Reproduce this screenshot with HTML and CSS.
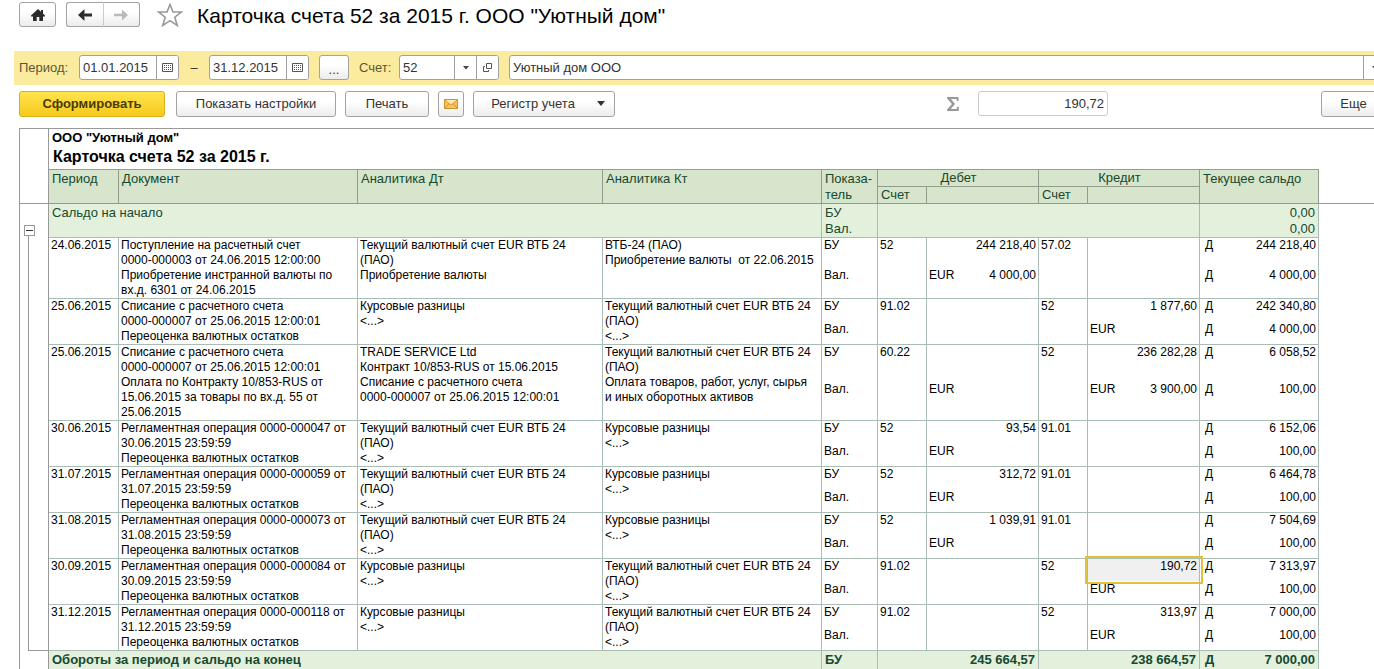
FILE: index.html
```html
<!DOCTYPE html>
<html lang="ru">
<head>
<meta charset="utf-8">
<meta name="viewport" content="width=device-width, initial-scale=1">
<title>Карточка счета 52 за 2015 г.</title>
<link rel="stylesheet" href="styles.css">
</head>
<body>
<header class="topbar">
  <button class="btn home" type="button" aria-label="Начальная страница">
    <svg width="16" height="14" viewBox="0 0 16 14"><path d="M8 1 1 7.500V8.500H3V13h3.700V9h2.600v4H13V8.500h2V7.500L13 5.600V2h-2v1.800z" fill="#2b2b2b"/></svg>
  </button>
  <div class="nav">
    <button class="btn" type="button" aria-label="Назад">
      <svg width="16" height="12" viewBox="0 0 16 12"><path d="M7 .5v4h8v3H7v4L1 6z" fill="#2b2b2b"/><path d="M7.500 0v4H5.500zM7.500 12V8H5.500z" fill="#2b2b2b"/></svg>
    </button>
    <button class="btn" type="button" aria-label="Вперед">
      <svg width="16" height="12" viewBox="0 0 16 12"><path d="M9 .5v4.300H1v2.400h8v4.300L15 6z" fill="#b9b9b9"/></svg>
    </button>
  </div>
  <button class="star" type="button" aria-label="Избранное">
    <svg width="26" height="24" viewBox="0 0 26 24"><path d="M13 1.500l3 7.500h8.500l-6.700 5.200 2.500 8.300L13 17.700l-7.300 4.800 2.500-8.300L1.500 9H10z" fill="#fff" stroke="#999" stroke-width="1.600"/></svg>
  </button>
  <h1 class="title">Карточка счета 52 за 2015 г. ООО "Уютный дом"</h1>
</header>

<form class="filter">
  <label class="caption caption-period" for="from">Период:</label>
  <div class="field date">
    <input id="from" type="text" value="01.01.2015">
    <button type="button" aria-label="Календарь"><svg width="11" height="9" viewBox="0 0 11 9"><path d="M.5.5h10v8H.5z" fill="none" stroke="#555"/><path d="M2 2.500h7M2 4.500h7M2 6.500h7" stroke="#555" stroke-dasharray="1 1"/></svg></button>
  </div>
  <span class="dash">–</span>
  <div class="field date">
    <input type="text" value="31.12.2015" aria-label="Конец периода">
    <button type="button" aria-label="Календарь"><svg width="11" height="9" viewBox="0 0 11 9"><path d="M.5.5h10v8H.5z" fill="none" stroke="#555"/><path d="M2 2.500h7M2 4.500h7M2 6.500h7" stroke="#555" stroke-dasharray="1 1"/></svg></button>
  </div>
  <button class="btn dots" type="button" aria-label="Выбрать период">...</button>
  <label class="caption caption-account" for="account">Счет:</label>
  <div class="field account">
    <input id="account" type="text" value="52">
    <button type="button" aria-label="Список"><svg width="6" height="4" viewBox="0 0 6 4"><path d="M0 0h6L3 3.500z" fill="#444"/></svg></button>
    <button type="button" aria-label="Открыть"><svg width="9" height="9" viewBox="0 0 9 9"><path d="M3.500.5h5v5h-5zM2 3.500H.5v5h5V7" fill="none" stroke="#555"/></svg></button>
  </div>
  <div class="field org">
    <input type="text" value="Уютный дом ООО" aria-label="Организация">
    <button type="button" aria-label="Список"><svg width="6" height="4" viewBox="0 0 6 4"><path d="M0 0h6L3 3.500z" fill="#444"/></svg></button>
  </div>
</form>

<div class="actions">
  <button class="btn primary" type="button">Сформировать</button>
  <button class="btn settings" type="button">Показать настройки</button>
  <button class="btn print" type="button">Печать</button>
  <button class="btn mail" type="button" aria-label="Отправить по почте">
    <svg width="14" height="10" viewBox="0 0 14 10"><path d="M.5.5h13v9H.5z" fill="#f6c45c" stroke="#cf922c"/><path d="M.5.5 7 6.200 13.500.5M.5 9.500 5 4.600M13.500 9.500 9 4.600" fill="none" stroke="#cf922c"/><path d="M1.500.900h11L7 5.500z" fill="#fde6a8"/></svg>
  </button>
  <button class="btn register" type="button">Регистр учета <svg width="8" height="5" viewBox="0 0 8 5"><path d="M0 0h8L4 5z" fill="#333"/></svg></button>
  <label class="sigma" for="sum" aria-label="Сумма"><svg width="12" height="14" viewBox="0 0 12 14"><path d="M0 0h11.500v4H10l-.7-2H4l4 5-4.200 5H9.500l.8-2.200h1.500V14H0v-1.600L4.900 7 0 1.600z" fill="#999"/></svg></label>
  <input class="sum" id="sum" type="text" value="190,72">
  <button class="btn more" type="button">Еще</button>
</div>

<main class="sheet">
<table class="report">
  <colgroup>
    <col class="c-gutter"><col class="c-period"><col class="c-doc"><col class="c-dt"><col class="c-kt"><col class="c-kind">
    <col class="c-acc"><col class="c-sum"><col class="c-acc"><col class="c-sum"><col class="c-balance"><col>
  </colgroup>
  <thead>
    <tr><td class="gutter rule" rowspan="4"></td><td class="company" colspan="10">ООО "Уютный дом"</td><td></td></tr>
    <tr><td class="heading rule" colspan="10">Карточка счета 52 за 2015 г.</td><td></td></tr>
    <tr class="head">
      <th rowspan="2">Период</th><th rowspan="2">Документ</th><th rowspan="2">Аналитика Дт</th><th rowspan="2">Аналитика Кт</th>
      <th rowspan="2">Показа-<br>тель</th><th class="mid" colspan="2">Дебет</th><th class="mid" colspan="2">Кредит</th><th rowspan="2">Текущее сальдо</th>
      <td class="spare" rowspan="2"></td>
    </tr>
    <tr class="head"><th>Счет</th><th></th><th>Счет</th><th></th></tr>
  </thead>
  <tbody>
    <tr class="opening">
      <td class="gutter toggle"><button type="button" aria-label="Свернуть"></button></td>
      <td colspan="4">Сальдо на начало</td><td>БУ<br>Вал.</td><td colspan="4"></td><td class="num">0,00<br>0,00</td>
    </tr>

    <tr class="main">
      <td class="gutter bracket" rowspan="16"></td>
      <td rowspan="2">24.06.2015</td>
      <td rowspan="2">Поступление на расчетный счет<br>0000-000003 от 24.06.2015 12:00:00<br>Приобретение инстранной валюты по<br>вх.д. 6301 от 24.06.2015</td>
      <td rowspan="2">Текущий валютный счет EUR ВТБ 24<br>(ПАО)<br>Приобретение валюты</td>
      <td rowspan="2">ВТБ-24 (ПАО)<br>Приобретение валюты&nbsp; от 22.06.2015</td>
      <td>БУ</td><td>52</td><td class="num">244 218,40</td><td>57.02</td><td></td><td><div class="pair"><span>Д</span><span>244 218,40</span></div></td>
    </tr>
    <tr class="cur"><td>Вал.</td><td></td><td><div class="pair"><span>EUR</span><span>4 000,00</span></div></td><td></td><td></td><td><div class="pair"><span>Д</span><span>4 000,00</span></div></td></tr>

    <tr class="main">
      <td rowspan="2">25.06.2015</td>
      <td rowspan="2">Списание с расчетного счета<br>0000-000007 от 25.06.2015 12:00:01<br>Переоценка валютных остатков</td>
      <td rowspan="2">Курсовые разницы<br>&lt;...&gt;</td>
      <td rowspan="2">Текущий валютный счет EUR ВТБ 24<br>(ПАО)<br>&lt;...&gt;</td>
      <td>БУ</td><td>91.02</td><td></td><td>52</td><td class="num">1 877,60</td><td><div class="pair"><span>Д</span><span>242 340,80</span></div></td>
    </tr>
    <tr class="cur"><td>Вал.</td><td></td><td></td><td></td><td>EUR</td><td><div class="pair"><span>Д</span><span>4 000,00</span></div></td></tr>

    <tr class="main">
      <td rowspan="2">25.06.2015</td>
      <td rowspan="2">Списание с расчетного счета<br>0000-000007 от 25.06.2015 12:00:01<br>Оплата по Контракту 10/853-RUS от<br>15.06.2015 за товары по вх.д. 55 от<br>25.06.2015</td>
      <td rowspan="2">TRADE SERVICE Ltd<br>Контракт 10/853-RUS от 15.06.2015<br>Списание с расчетного счета<br>0000-000007 от 25.06.2015 12:00:01</td>
      <td rowspan="2">Текущий валютный счет EUR ВТБ 24<br>(ПАО)<br>Оплата товаров, работ, услуг, сырья<br>и иных оборотных активов</td>
      <td>БУ</td><td>60.22</td><td></td><td>52</td><td class="num">236 282,28</td><td><div class="pair"><span>Д</span><span>6 058,52</span></div></td>
    </tr>
    <tr class="cur"><td>Вал.</td><td></td><td>EUR</td><td></td><td><div class="pair"><span>EUR</span><span>3 900,00</span></div></td><td><div class="pair"><span>Д</span><span>100,00</span></div></td></tr>

    <tr class="main">
      <td rowspan="2">30.06.2015</td>
      <td rowspan="2">Регламентная операция 0000-000047 от<br>30.06.2015 23:59:59<br>Переоценка валютных остатков</td>
      <td rowspan="2">Текущий валютный счет EUR ВТБ 24<br>(ПАО)<br>&lt;...&gt;</td>
      <td rowspan="2">Курсовые разницы<br>&lt;...&gt;</td>
      <td>БУ</td><td>52</td><td class="num">93,54</td><td>91.01</td><td></td><td><div class="pair"><span>Д</span><span>6 152,06</span></div></td>
    </tr>
    <tr class="cur"><td>Вал.</td><td></td><td>EUR</td><td></td><td></td><td><div class="pair"><span>Д</span><span>100,00</span></div></td></tr>

    <tr class="main">
      <td rowspan="2">31.07.2015</td>
      <td rowspan="2">Регламентная операция 0000-000059 от<br>31.07.2015 23:59:59<br>Переоценка валютных остатков</td>
      <td rowspan="2">Текущий валютный счет EUR ВТБ 24<br>(ПАО)<br>&lt;...&gt;</td>
      <td rowspan="2">Курсовые разницы<br>&lt;...&gt;</td>
      <td>БУ</td><td>52</td><td class="num">312,72</td><td>91.01</td><td></td><td><div class="pair"><span>Д</span><span>6 464,78</span></div></td>
    </tr>
    <tr class="cur"><td>Вал.</td><td></td><td>EUR</td><td></td><td></td><td><div class="pair"><span>Д</span><span>100,00</span></div></td></tr>

    <tr class="main">
      <td rowspan="2">31.08.2015</td>
      <td rowspan="2">Регламентная операция 0000-000073 от<br>31.08.2015 23:59:59<br>Переоценка валютных остатков</td>
      <td rowspan="2">Текущий валютный счет EUR ВТБ 24<br>(ПАО)<br>&lt;...&gt;</td>
      <td rowspan="2">Курсовые разницы<br>&lt;...&gt;</td>
      <td>БУ</td><td>52</td><td class="num">1 039,91</td><td>91.01</td><td></td><td><div class="pair"><span>Д</span><span>7 504,69</span></div></td>
    </tr>
    <tr class="cur"><td>Вал.</td><td></td><td>EUR</td><td></td><td></td><td><div class="pair"><span>Д</span><span>100,00</span></div></td></tr>

    <tr class="main">
      <td rowspan="2">30.09.2015</td>
      <td rowspan="2">Регламентная операция 0000-000084 от<br>30.09.2015 23:59:59<br>Переоценка валютных остатков</td>
      <td rowspan="2">Курсовые разницы<br>&lt;...&gt;</td>
      <td rowspan="2">Текущий валютный счет EUR ВТБ 24<br>(ПАО)<br>&lt;...&gt;</td>
      <td>БУ</td><td>91.02</td><td></td><td>52</td><td class="num selected">190,72</td><td><div class="pair"><span>Д</span><span>7 313,97</span></div></td>
    </tr>
    <tr class="cur"><td>Вал.</td><td></td><td></td><td></td><td>EUR</td><td><div class="pair"><span>Д</span><span>100,00</span></div></td></tr>

    <tr class="main">
      <td rowspan="2">31.12.2015</td>
      <td rowspan="2">Регламентная операция 0000-000118 от<br>31.12.2015 23:59:59<br>Переоценка валютных остатков</td>
      <td rowspan="2">Курсовые разницы<br>&lt;...&gt;</td>
      <td rowspan="2">Текущий валютный счет EUR ВТБ 24<br>(ПАО)<br>&lt;...&gt;</td>
      <td>БУ</td><td>91.02</td><td></td><td>52</td><td class="num">313,97</td><td><div class="pair"><span>Д</span><span>7 000,00</span></div></td>
    </tr>
    <tr class="cur"><td>Вал.</td><td></td><td></td><td></td><td>EUR</td><td><div class="pair"><span>Д</span><span>100,00</span></div></td></tr>
  </tbody>
  <tfoot>
    <tr class="total">
      <td class="gutter"></td><td colspan="4">Обороты за период и сальдо на конец</td><td>БУ</td>
      <td class="num" colspan="2">245 664,57</td><td class="num" colspan="2">238 664,57</td>
      <td><div class="pair"><span>Д</span><span>7 000,00</span></div></td>
    </tr>
  </tfoot>
</table>
</main>
</body>
</html>
```
FILE: styles.css
```css
* { box-sizing: border-box; }

body {
  margin: 0;
  height: 100vh;
  overflow: hidden;
  background: #fff;
  color: #333;
  font: 13px/17px "Liberation Sans", Arial, sans-serif;
}

button, input { font: inherit; color: inherit; }
button { padding: 0; }

.btn {
  display: flex;
  align-items: center;
  justify-content: center;
  flex: none;
  height: 26px;
  border: 1px solid #a3a3a3;
  border-radius: 3px;
  background: linear-gradient(#fff 40%, #ececec);
}

/* Window header */
.topbar {
  display: flex;
  align-items: center;
  height: 51px;
  padding: 2px 0 24px 19px;
}
.home, .nav .btn { height: 25px; }
.home { width: 37px; margin-right: 10px; }
.nav { display: flex; width: 74px; margin-right: 17px; }
.nav .btn { flex: 1; }
.nav .btn:first-child { border-radius: 3px 0 0 3px; border-right-color: #ccc; }
.nav .btn:last-child { border-radius: 0 3px 3px 0; border-left: 0; }
.star { display: flex; border: 0; background: none; margin-right: 14px; }
.title {
  margin: 3px 0 0;
  color: #000;
  font-size: 21px;
  font-weight: 400;
  line-height: 24px;
  white-space: nowrap;
}

/* Period and account selection */
.filter {
  display: flex;
  align-items: center;
  height: 34px;
  margin: 0 -12px 0 14px;
  padding: 0 0 1px 5px;
  background: #fbeb9f;
}
.caption { flex: none; color: #5c5636; }
.caption-period { width: 60px; }
.caption-account { width: 40px; }
.field {
  display: flex;
  flex: none;
  height: 25px;
  border: 1px solid #a0a0a0;
  border-radius: 3px;
  background: #fff;
  overflow: hidden;
}
.field input {
  flex: 1;
  min-width: 0;
  padding: 0 3px;
  border: 0;
  background: none;
}
.field button {
  display: flex;
  align-items: center;
  justify-content: center;
  width: 22px;
  border: 0;
  border-left: 1px solid #a0a0a0;
  background: #fff;
}
.date, .account { width: 100px; }
.dash { width: 30px; text-align: center; }
.dots { width: 30px; height: 25px; margin: 0 10px; padding-top: 4px; }
.org { flex: 1; margin-left: 10px; }

/* Commands */
.actions {
  display: flex;
  align-items: center;
  height: 43px;
  margin-right: -12px;
  padding: 0 0 6px 19px;
}
.primary {
  width: 146px;
  border-color: #d9b21c;
  background: linear-gradient(#ffe44d, #f6c91c);
  color: #4a3c00;
  font-weight: 700;
}
.settings { width: 160px; margin-left: 11px; }
.print { width: 84px; margin-left: 9px; }
.mail { width: 26px; margin-left: 9px; }
.register { width: 142px; gap: 22px; margin-left: 9px; padding-left: 8px; }
.sigma { display: flex; margin: 0 19px 0 auto; }
.sum {
  width: 130px;
  height: 25px;
  padding: 0 3px;
  border: 1px solid #ccc;
  border-radius: 3px;
  text-align: right;
}
.more { width: 65px; margin-left: 213px; }

/* Spreadsheet */
.sheet { padding-left: 19px; }
.report {
  width: 100%;
  border-top: 1px solid #999;
  border-left: 1px solid #999;
  border-spacing: 0;
  table-layout: fixed;
  color: #000;
  font-size: 12px;
  line-height: 15px;
}
.c-gutter { width: 29px; }
.c-period { width: 70px; }
.c-doc { width: 239px; }
.c-dt { width: 245px; }
.c-kt { width: 219px; }
.c-kind { width: 56px; }
.c-acc { width: 49px; }
.c-sum { width: 112px; }
.c-balance { width: 119px; }

.report td, .report th {
  padding: 0 2px;
  text-align: left;
  vertical-align: top;
  font-weight: inherit;
  white-space: nowrap;
}
.report .gutter { padding: 0; border-right: 1px solid #999; }
.report .rule { border-bottom: 1px solid #999; }
.report .company {
  height: 17px;
  padding-left: 3px;
  font-size: 13px;
  line-height: 17px;
  font-weight: 700;
}
.report .heading {
  height: 24px;
  padding-left: 4px;
  font-size: 16px;
  line-height: 22px;
  font-weight: 700;
}
.head { color: #17492f; font-size: 13px; line-height: 16px; }
.report .head th {
  height: 17px;
  padding-left: 3px;
  border-right: 1px solid #929c8c;
  border-bottom: 1px solid #929c8c;
  background: #d6e5cb;
}
.report .head th[rowspan] { padding-top: 1px; }
.report .head .mid { text-align: center; }
.report .spare { border-bottom: 1px solid #999; }

.opening, .total { color: #17492f; font-size: 13px; line-height: 17px; }
.report .opening td:not(.gutter), .report .total td:not(.gutter) {
  height: 34px;
  padding: 0 3px;
  border-right: 1px solid #a9bdb4;
  background: #e2f0dc;
}
.report .opening td:not(.gutter) {
  padding-top: 1px;
  line-height: 16px;
  border-bottom: 1px solid #a9bdb4;
}
.report .total td { font-weight: 700; }

.main td:not(.gutter), .cur td { border-right: 1px solid #a9bdb4; }
.main td[rowspan]:not(.gutter), .cur td { border-bottom: 1px solid #a9bdb4; }
.report .cur td { padding-top: 1px; }
.report .num { text-align: right; }
.pair { display: flex; justify-content: space-between; }
.report td:last-child .pair { padding-left: 3px; }
.report .total td:last-child .pair { padding-left: 2px; }
.report .selected {
  background: #f0f0f0;
  outline: 2px solid #dfc23a;
  outline-offset: 1px;
}

/* Row grouping marks */
.report .toggle {
  vertical-align: bottom;
  padding: 0 0 2px 4px;
  background: linear-gradient(#999, #999) 8px 100% / 1px 3px no-repeat;
}
.toggle button {
  display: block;
  width: 11px;
  height: 11px;
  border: 1px solid #999;
  background: linear-gradient(#333, #333) center / 7px 1px no-repeat #fff;
}
.report .bracket {
  background:
    linear-gradient(#999, #999) 8px 0 / 1px 100% no-repeat,
    linear-gradient(#999, #999) 8px 100% / 100% 1px no-repeat;
}
```
